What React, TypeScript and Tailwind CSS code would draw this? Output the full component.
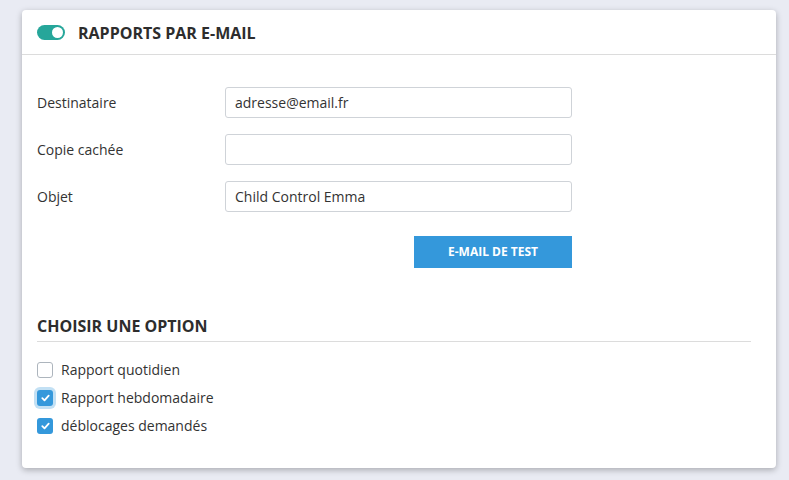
import React from "react";

function Check({ checked, focus }: { checked?: boolean; focus?: boolean }) {
  return (
    <span
      className={
        "inline-flex items-center justify-center w-4 h-4 rounded-[3px] shrink-0 " +
        (checked ? "bg-[#3498db]" : "bg-white border border-[#adb5bd]") +
        (focus ? " ring-[3px] ring-[#3498db]/30" : "")
      }
    >
      {checked && (
        <svg width="9" height="8" viewBox="0 0 9 8">
          <path d="M1.3 4.2 L3.5 6.3 L7.7 1.6" fill="none" stroke="#fff" strokeWidth="1.8" strokeLinecap="round" strokeLinejoin="round" />
        </svg>
      )}
    </span>
  );
}

export default function App() {
  const fields = [
    { label: "Destinataire", value: "adresse@email.fr" },
    { label: "Copie cachée", value: "" },
    { label: "Objet", value: "Child Control Emma" },
  ];
  const options = [
    { label: "Rapport quotidien", checked: false },
    { label: "Rapport hebdomadaire", checked: true, focus: true },
    { label: "déblocages demandés", checked: true },
  ];

  return (
    <div
      className="w-[789px] h-[480px] bg-[#e9ebf3] pt-[10px] pl-[22px]"
      style={{ fontFamily: '"Open Sans", "Noto Sans", sans-serif' }}
    >
      <div className="w-[754px] h-[458px] bg-white rounded-[4px] shadow-[0_2px_6px_rgba(0,0,0,0.28)]">
        {/* Header */}
        <div className="h-[45px] border-b border-[#dcdcdc] flex items-center pl-[15px] gap-[13px]">
          <span className="relative w-[28px] h-[15px] rounded-full bg-[#26a69a]">
            <span className="absolute right-[2px] top-[2px] w-[11px] h-[11px] rounded-full bg-white" />
          </span>
          <span className="text-[16px] font-bold text-[#2d2d2d] pt-[1px]">RAPPORTS PAR E-MAIL</span>
        </div>

        {/* Form */}
        <div className="pl-[15px] pr-[204px] pt-[32px]">
          <div className="flex flex-col gap-[16px]">
            {fields.map((f) => (
              <div key={f.label} className="flex items-center">
                <label className="w-[188px] text-[14px] text-[#333]">{f.label}</label>
                <input
                  readOnly
                  value={f.value}
                  className="w-[347px] h-[31px] border border-[#cfd3d8] rounded-[3px] px-[9px] text-[14px] text-[#333] outline-none"
                />
              </div>
            ))}
          </div>
          <div className="flex justify-end mt-[24px]">
            <button className="w-[158px] h-[32px] bg-[#3498db] text-white text-[12px] font-bold">E-MAIL DE TEST</button>
          </div>
        </div>

        {/* Options */}
        <div className="pl-[15px] pr-[25px] pt-[46px]">
          <div className="border-b border-[#dcdcdc] pb-[3px] text-[16px] font-bold text-[#2d2d2d]">CHOISIR UNE OPTION</div>
          <div className="flex flex-col gap-[7px] pt-[17px]">
            {options.map((o) => (
              <div key={o.label} className="flex items-center gap-[8px] h-[21px]">
                <Check checked={o.checked} focus={o.focus} />
                <span className="text-[14px] text-[#333]">{o.label}</span>
              </div>
            ))}
          </div>
        </div>
      </div>
    </div>
  );
}
